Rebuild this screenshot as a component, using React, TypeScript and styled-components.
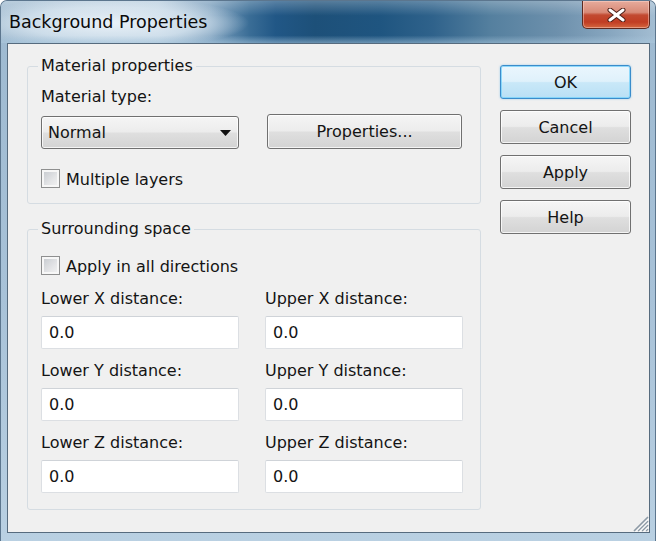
import React from 'react';
import styled, { createGlobalStyle } from 'styled-components';

const GlobalStyle = createGlobalStyle`
  html, body {
    margin: 0;
    padding: 0;
    background: #ffffff;
  }
  body {
    font-family: "DejaVu Sans", "Liberation Sans", sans-serif;
  }
`;

const Window = styled.div`
  width: 656px;
  height: 541px;
  box-sizing: border-box;
  display: flex;
  flex-direction: column;
  background: linear-gradient(to bottom, #9db9d0 0%, #a8c2d8 55%, #b9d0e2 100%);
  border: 1px solid #5c768e;
  border-bottom: none;
  border-radius: 7px 7px 0 0;
  overflow: hidden;
  font-family: "DejaVu Sans", "Liberation Sans", sans-serif;
  color: #141414;
`;

const TitleBar = styled.div`
  height: 42px;
  flex: none;
  display: flex;
  justify-content: space-between;
  align-items: flex-start;
  background:
    linear-gradient(to bottom, rgba(255, 255, 255, 0.25) 0%, rgba(255, 255, 255, 0) 35%, rgba(0, 0, 0, 0) 82%, rgba(170, 200, 222, 0.55) 100%),
    radial-gradient(ellipse 140px 26px at 108px 22px, rgba(236, 243, 249, 0.95) 0%, rgba(214, 228, 239, 0.8) 62%, rgba(190, 212, 229, 0) 100%),
    linear-gradient(to right, #a2bcd1 0%, #b2c9db 24%, #7fa2bf 32%, #3a6d96 38%, #215786 42%, #1d5079 48%, #1f5580 58%, #2f628b 66%, #55809f 75%, #6d90ac 85%, #87a6bf 93%, #a3bdd2 100%);
`;

const Title = styled.span`
  padding: 10px 0 0 8px;
  font-size: 17.5px;
  line-height: 22px;
  color: #0a0a0a;
`;

const CloseButton = styled.div`
  width: 68px;
  height: 28px;
  margin-right: 5px;
  box-sizing: border-box;
  display: flex;
  align-items: center;
  justify-content: center;
  border: 1px solid #5e2a20;
  border-top: none;
  border-radius: 0 0 5px 5px;
  background: linear-gradient(to bottom, #e6ab9c 0%, #d88a77 42%, #c24a31 52%, #c13d23 78%, #d4673f 100%);
  box-shadow: inset 0 0 0 1px rgba(255, 220, 210, 0.45);
`;

const Client = styled.div`
  flex: 1;
  margin: 0 5px 8px 6px;
  box-sizing: border-box;
  border: 1px solid #566b7e;
  background: #f0f0f0;
  display: flex;
  align-items: flex-start;
  padding: 12px 0 0 19px;
  position: relative;
`;

const LeftColumn = styled.div`
  width: 454px;
  display: flex;
  flex-direction: column;
  gap: 15px;
`;

const Group = styled.fieldset<{ $padTop: number; $padBottom: number }>`
  margin: 0;
  min-width: 0;
  padding: ${p => p.$padTop}px 17px ${p => p.$padBottom}px 13px;
  border: 1px solid #d5dce2;
  border-radius: 3px;
  display: flex;
  flex-direction: column;
`;

const GroupTitle = styled.legend`
  padding: 0 3px;
  margin-left: -3px;
  font-size: 16px;
  line-height: 20px;
`;

const Label = styled.div`
  padding-top: 2px;
  font-size: 16px;
  line-height: 20px;
  white-space: nowrap;
`;

const ControlRow = styled.div`
  display: flex;
  align-items: flex-end;
  gap: 28px;
  margin-top: 7px;
`;

const Select = styled.div`
  width: 198px;
  height: 33px;
  box-sizing: border-box;
  display: flex;
  align-items: center;
  justify-content: space-between;
  padding: 0 7px 0 6px;
  font-size: 16px;
  border: 1px solid #707070;
  border-radius: 3px;
  background: linear-gradient(to bottom, #f5f5f5 0%, #ececec 48%, #dfdfdf 52%, #d3d3d3 100%);
  box-shadow: inset 0 0 0 1px rgba(255, 255, 255, 0.75);
`;

const PushButton = styled.div<{ $width: number; $height: number; $default?: boolean }>`
  width: ${p => p.$width}px;
  height: ${p => p.$height}px;
  box-sizing: border-box;
  display: flex;
  align-items: center;
  justify-content: center;
  font-size: 16px;
  border-radius: 3px;
  border: 1px solid ${p => (p.$default ? '#3a8ccb' : '#707070')};
  background: ${p =>
    p.$default
      ? 'linear-gradient(to bottom, #eaf6fd 0%, #dff1fb 48%, #c9e8f8 52%, #b9e0f5 100%)'
      : 'linear-gradient(to bottom, #f5f5f5 0%, #ececec 48%, #dfdfdf 52%, #d3d3d3 100%)'};
  box-shadow: ${p =>
    p.$default
      ? 'inset 0 0 0 1px rgba(120, 210, 250, 0.8), 0 0 2px rgba(80, 170, 230, 0.6)'
      : 'inset 0 0 0 1px rgba(255, 255, 255, 0.75)'};
`;

const CheckRow = styled.label<{ $top: number }>`
  display: flex;
  align-items: flex-start;
  gap: 6px;
  margin-top: ${p => p.$top}px;
  font-size: 16px;
  line-height: 20px;
`;

const CheckText = styled.span`
  padding-top: 2px;
`;

const CheckBox = styled.span`
  width: 19px;
  height: 19px;
  margin-top: 1px;
  box-sizing: border-box;
  border: 1px solid #8e8f8f;
  background: linear-gradient(135deg, #c4c8cd 0%, #e4e5e7 60%, #f4f4f4 100%);
  box-shadow: inset 0 0 0 2px #f7f7f7;
`;

const FieldGrid = styled.div`
  display: grid;
  grid-template-columns: 198px 198px;
  column-gap: 26px;
  row-gap: 10px;
  margin-top: 10px;
`;

const Field = styled.div`
  display: flex;
  flex-direction: column;
  gap: 7px;
`;

const TextBox = styled.div`
  height: 33px;
  box-sizing: border-box;
  display: flex;
  align-items: center;
  padding-left: 7px;
  font-size: 16px;
  background: #ffffff;
  border: 1px solid #dcdfe3;
  border-top-color: #cfd3d8;
  border-radius: 2px;
`;

const ButtonColumn = styled.div`
  display: flex;
  flex-direction: column;
  gap: 11px;
  margin: 9px 0 0 19px;
`;

const Grip = styled.svg`
  position: absolute;
  right: 0;
  bottom: 0;
`;

const fields = [
  ['Lower X distance:', 'Upper X distance:'],
  ['Lower Y distance:', 'Upper Y distance:'],
  ['Lower Z distance:', 'Upper Z distance:'],
];

export default function App() {
  return (
    <>
      <GlobalStyle />
      <Window>
        <TitleBar>
          <Title>Background Properties</Title>
          <CloseButton>
            <svg width="19" height="14" viewBox="0 0 19 14">
              <path d="M3 2 L16 12 M16 2 L3 12" stroke="#4b1e16" strokeWidth="5" strokeLinecap="round" />
              <path d="M3 2 L16 12 M16 2 L3 12" stroke="#ffffff" strokeWidth="3" strokeLinecap="round" />
            </svg>
          </CloseButton>
        </TitleBar>
        <Client>
          <LeftColumn>
            <Group $padTop={9} $padBottom={13}>
              <GroupTitle>Material properties</GroupTitle>
              <Label>Material type:</Label>
              <ControlRow>
                <Select>
                  <span>Normal</span>
                  <svg width="11" height="6" viewBox="0 0 11 6">
                    <path d="M0 0 H11 L5.5 6 Z" fill="#111" />
                  </svg>
                </Select>
                <PushButton $width={195} $height={35}>Properties...</PushButton>
              </ControlRow>
              <CheckRow $top={19}>
                <CheckBox />
                <CheckText>Multiple layers</CheckText>
              </CheckRow>
            </Group>
            <Group $padTop={16} $padBottom={16}>
              <GroupTitle>Surrounding space</GroupTitle>
              <CheckRow $top={0}>
                <CheckBox />
                <CheckText>Apply in all directions</CheckText>
              </CheckRow>
              <FieldGrid>
                {fields.flat().map(label => (
                  <Field key={label}>
                    <Label>{label}</Label>
                    <TextBox>0.0</TextBox>
                  </Field>
                ))}
              </FieldGrid>
            </Group>
          </LeftColumn>
          <ButtonColumn>
            <PushButton $width={131} $height={34} $default>OK</PushButton>
            <PushButton $width={131} $height={34}>Cancel</PushButton>
            <PushButton $width={131} $height={34}>Apply</PushButton>
            <PushButton $width={131} $height={34}>Help</PushButton>
          </ButtonColumn>
          <Grip width="18" height="18" viewBox="0 0 18 18">
            <path d="M17 3 L3 17 M17 7 L7 17 M17 11 L11 17 M17 15 L15 17" stroke="#8d9aa6" strokeWidth="1.6" />
            <path d="M18 4.5 L4.5 18 M18 8.5 L8.5 18 M18 12.5 L12.5 18" stroke="#ffffff" strokeWidth="1" />
          </Grip>
        </Client>
      </Window>
    </>
  );
}
